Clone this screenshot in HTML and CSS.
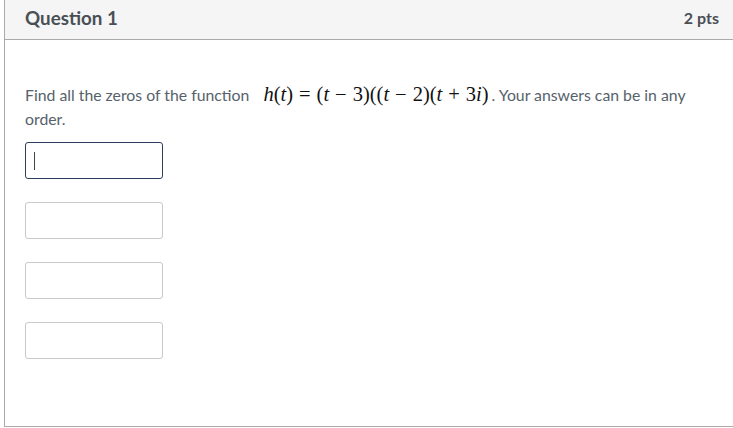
FILE: index.html
```html
<!DOCTYPE html>
<html>
<head>
<meta charset="utf-8">
<link rel="stylesheet" href="styles.css">
</head>
<body>
<div class="question">
  <div class="header">
    <div class="title">Question 1</div>
    <div class="pts">2 pts</div>
  </div>
  <div class="content">
    <p class="text">Find all the zeros of the function <span class="math"><i>h</i>(<i>t</i>)<span class="op">=</span>(<i>t</i><span class="op">−</span>3)((<i>t</i><span class="op">−</span>2)(<i>t</i><span class="op">+</span>3<i>i</i>)</span>. Your answers can be in any order.</p>
    <div class="answers">
      <div class="answer focused"><span class="caret"></span></div>
      <div class="answer"></div>
      <div class="answer"></div>
      <div class="answer"></div>
    </div>
  </div>
</div>
</body>
</html>
```

FILE: styles.css
```css
html, body {
  margin: 0;
  padding: 0;
  background: #fff;
}
body {
  font-family: Lato, "Open Sans", sans-serif;
  color: #3d4a52;
}
.question {
  margin-left: 4px;
  width: 760px;
  height: 427px;
  box-sizing: border-box;
  border-left: 1px solid #aaaaaa;
  border-bottom: 1px solid #aaaaaa;
  display: flex;
  flex-direction: column;
}
.header {
  height: 40px;
  box-sizing: border-box;
  background: #f5f5f5;
  border-bottom: 1px solid #aaaaaa;
  display: flex;
  align-items: center;
  justify-content: space-between;
  padding: 0 0 5px 20px;
  width: 728px;
}
.title {
  font-weight: 700;
  font-size: 18.8px;
  color: #4a4f55;
}
.pts {
  font-weight: 700;
  font-size: 16px;
  color: #4a4f55;
  margin-right: 14px;
}
.content {
  padding: 42px 0 0 20px;
}
.text {
  margin: 0;
  width: 680px;
  font-size: 15.8px;
  line-height: 24px;
  color: #56626b;
}
.math {
  font-family: "Liberation Serif", serif;
  font-size: 20.5px;
  color: #111;
  margin: 0 3px 0 10px;
}
.op {
  margin: 0 6px;
}
.answers {
  display: flex;
  flex-direction: column;
  gap: 23px;
  margin-top: 11px;
}
.answer {
  width: 138px;
  height: 37px;
  box-sizing: border-box;
  border: 1px solid #c9c9c9;
  border-radius: 3px;
  position: relative;
}
.answer.focused {
  border-color: #2b3e5c;
}
.caret {
  position: absolute;
  left: 8px;
  top: 9px;
  width: 1px;
  height: 18px;
  background: #444;
}
```
